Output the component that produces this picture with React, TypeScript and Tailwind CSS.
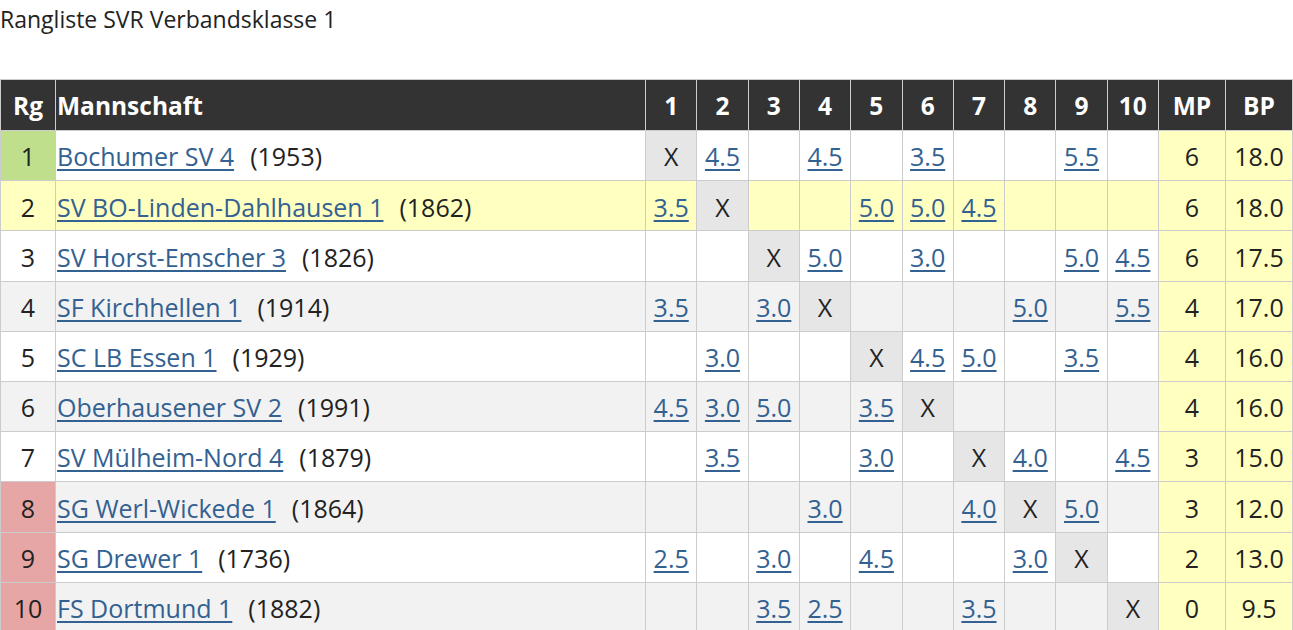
import React from 'react';

type Team = {
  name: string;
  dwz: string;
  res: (string | null)[];
  mp: string;
  bp: string;
};

const teams: Team[] = [
  { name: 'Bochumer SV 4', dwz: '1953', res: ['X', '4.5', null, '4.5', null, '3.5', null, null, '5.5', null], mp: '6', bp: '18.0' },
  { name: 'SV BO-Linden-Dahlhausen 1', dwz: '1862', res: ['3.5', 'X', null, null, '5.0', '5.0', '4.5', null, null, null], mp: '6', bp: '18.0' },
  { name: 'SV Horst-Emscher 3', dwz: '1826', res: [null, null, 'X', '5.0', null, '3.0', null, null, '5.0', '4.5'], mp: '6', bp: '17.5' },
  { name: 'SF Kirchhellen 1', dwz: '1914', res: ['3.5', null, '3.0', 'X', null, null, null, '5.0', null, '5.5'], mp: '4', bp: '17.0' },
  { name: 'SC LB Essen 1', dwz: '1929', res: [null, '3.0', null, null, 'X', '4.5', '5.0', null, '3.5', null], mp: '4', bp: '16.0' },
  { name: 'Oberhausener SV 2', dwz: '1991', res: ['4.5', '3.0', '5.0', null, '3.5', 'X', null, null, null, null], mp: '4', bp: '16.0' },
  { name: 'SV Mülheim-Nord 4', dwz: '1879', res: [null, '3.5', null, null, '3.0', null, 'X', '4.0', null, '4.5'], mp: '3', bp: '15.0' },
  { name: 'SG Werl-Wickede 1', dwz: '1864', res: [null, null, null, '3.0', null, null, '4.0', 'X', '5.0', null], mp: '3', bp: '12.0' },
  { name: 'SG Drewer 1', dwz: '1736', res: ['2.5', null, '3.0', null, '4.5', null, null, '3.0', 'X', null], mp: '2', bp: '13.0' },
  { name: 'FS Dortmund 1', dwz: '1882', res: [null, null, '3.5', '2.5', null, null, '3.5', null, null, 'X'], mp: '0', bp: '9.5' },
];

const rowBg = (i: number) => {
  if (i === 1) return 'bg-[#ffffc0]';
  return i % 2 === 1 ? 'bg-[#f2f2f2]' : 'bg-white';
};

const rankBg = (i: number) => {
  if (i === 0) return 'bg-[#bfdf8c]';
  if (i >= 7) return 'bg-[#e6a6a6]';
  return '';
};

export default function App() {
  return (
    <div className="w-[1293px] h-[630px] overflow-hidden bg-white text-[#222] font-['Open_Sans','Noto_Sans',sans-serif]">
      <div className="h-[79px] text-[23px] leading-[38px]">Rangliste SVR Verbandsklasse 1</div>
      <table className="w-full table-fixed border-collapse text-[25px]">
        <colgroup>
          <col className="w-[55px]" />
          <col />
          {Array.from({ length: 10 }).map((_, k) => (
            <col key={k} className="w-[51.3px]" />
          ))}
          <col className="w-[67px]" />
          <col className="w-[67px]" />
        </colgroup>
        <thead>
          <tr className="bg-[#333] text-white font-bold text-[24.5px] h-[51px]">
            <th className="border border-[#ccc] text-center pt-[3px]">Rg</th>
            <th className="border border-[#ccc] text-left pl-[1px] pt-[3px]">Mannschaft</th>
            {Array.from({ length: 10 }).map((_, k) => (
              <th key={k} className="border border-[#ccc] text-center pt-[3px]">{k + 1}</th>
            ))}
            <th className="border border-[#ccc] text-center pt-[3px]">MP</th>
            <th className="border border-[#ccc] text-center pt-[3px]">BP</th>
          </tr>
        </thead>
        <tbody>
          {teams.map((t, i) => (
            <tr key={t.name} className={`${rowBg(i)} h-[50.2px]`}>
              <td className={`border border-[#ccc] text-center pt-[3px] ${rankBg(i)}`}>{i + 1}</td>
              <td className="border border-[#ccc] pl-[1px] pt-[3px] whitespace-nowrap">
                <a href="#" className="text-[#336191] underline underline-offset-[3px]">{t.name}</a>
                <span className="ml-[16px]">({t.dwz})</span>
              </td>
              {t.res.map((r, k) => (
                <td key={k} className={`border border-[#ccc] text-center pt-[3px] ${r === 'X' ? 'bg-[#e6e6e6]' : ''}`}>
                  {r === 'X' ? 'X' : r ? <a href="#" className="text-[#336191] underline underline-offset-[3px]">{r}</a> : null}
                </td>
              ))}
              <td className="border border-[#ccc] text-center pt-[3px] bg-[#ffffc0]">{t.mp}</td>
              <td className="border border-[#ccc] text-center pt-[3px] bg-[#ffffc0]">{t.bp}</td>
            </tr>
          ))}
        </tbody>
      </table>
    </div>
  );
}
